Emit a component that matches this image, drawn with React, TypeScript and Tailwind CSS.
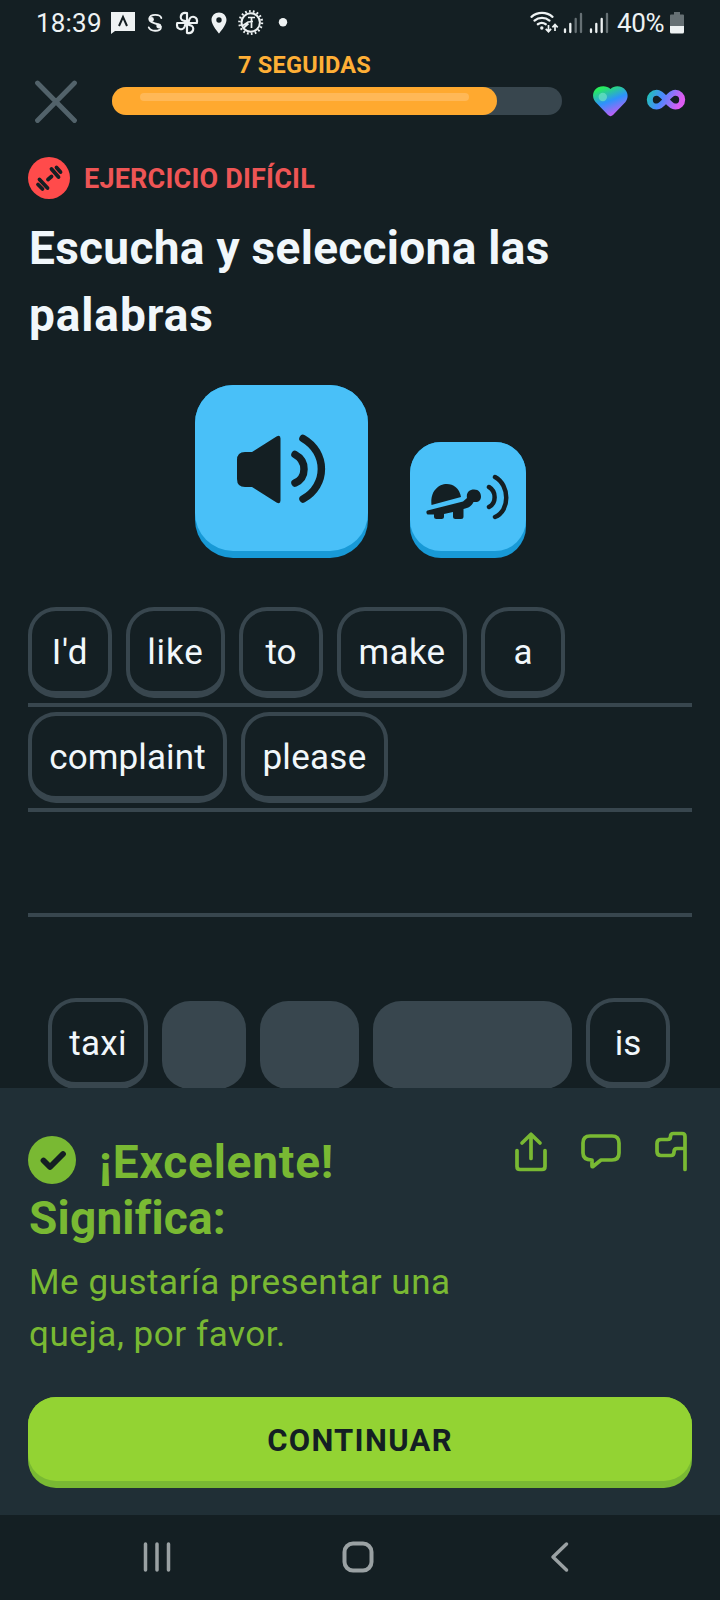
import type { ReactNode } from "react";

function Chip({ children, width, tracking = "" }: { children: ReactNode; width: string; tracking?: string }) {
  return (
    <button
      className={`${width} flex h-[91px] shrink-0 items-center justify-center rounded-[28px] border-4 border-b-[7px] border-[#38464e] pt-[3px] text-[35px] leading-none text-[#f1f7fb] ${tracking}`}
    >
      {children}
    </button>
  );
}

function Used({ width }: { width: string }) {
  return <div className={`${width} mt-[3px] h-[88px] shrink-0 rounded-[28px] bg-[#38464e]`} />;
}

function StatusBar() {
  return (
    <div className="flex h-[45px] items-center text-[26px] leading-none text-[#eef2f3]">
      <span className="ml-[36px] w-[75px] tracking-[0.200px]">18:39</span>
      <svg className="h-[45px] w-[180px]" viewBox="111 0 180 45" fill="none">
        <path d="M111 12h24v19h-20l-4 3z" fill="#eef2f3" />
        <path d="M119 26l4-9 4 9" stroke="#141f23" strokeWidth="2" />
        <path
          d="M161.300 18c-1-4-11-4.500-12 .5-.3 3.500 3 4 6 5 4 1 6.500 2 5.500 4.500-1 4-10.500 3.500-12-.5"
          stroke="#eef2f3"
          strokeWidth="1.900"
          strokeLinecap="round"
        />
        <circle cx="151.500" cy="19.500" r="2.400" fill="#eef2f3" />
        <circle cx="158.700" cy="26" r="2.400" fill="#eef2f3" />
        <g stroke="#eef2f3" strokeWidth="2.200" strokeLinejoin="round">
          <path d="M187 23V13.200c-7-1.500-8 6-3.500 7.500 2 .4 3.500 1 3.500 2.300z" />
          <path d="M187 23V13.200c-7-1.500-8 6-3.500 7.500 2 .4 3.500 1 3.500 2.300z" transform="rotate(90 187 23)" />
          <path d="M187 23V13.200c-7-1.500-8 6-3.500 7.500 2 .4 3.500 1 3.500 2.300z" transform="rotate(180 187 23)" />
          <path d="M187 23V13.200c-7-1.500-8 6-3.500 7.500 2 .4 3.500 1 3.500 2.300z" transform="rotate(270 187 23)" />
        </g>
        <path
          fillRule="evenodd"
          d="M219 12.500c-4.200 0-7.500 3.200-7.500 7.400 0 5 7.500 13.500 7.500 13.500s7.500-8.500 7.500-13.500c0-4.200-3.300-7.400-7.500-7.400zm0 4.800a2.700 2.700 0 1 1 0 5.400 2.700 2.700 0 0 1 0-5.400z"
          fill="#eef2f3"
        />
        <circle cx="250.700" cy="22.500" r="11.300" stroke="#eef2f3" strokeWidth="2.400" strokeDasharray="1.700 2.237" />
        <circle cx="250.700" cy="22.500" r="9.200" stroke="#eef2f3" strokeWidth="2" />
        <path d="M248 17.500h7M251.500 18v10M243 25.500l5-3.500 5-.5M243.500 28l5-4.500" stroke="#eef2f3" strokeWidth="1.700" />
        <circle cx="283" cy="22.300" r="4.200" fill="#eef2f3" />
      </svg>
      <svg className="ml-auto h-[45px] w-[87px]" viewBox="528 0 87 45" fill="none">
        <g stroke="#eef2f3" strokeWidth="2.300" strokeLinecap="round">
          <path d="M531.500 16.800c6-5.200 15-5.200 21 0" />
          <path d="M534.500 20.600c4.300-3.600 10.700-3.600 15 0" />
          <path d="M537.800 24.200c2.600-1.800 5.400-1.800 8 0" />
        </g>
        <circle cx="541.800" cy="28" r="1.700" fill="#eef2f3" />
        <path d="M548.500 25v6.500m-2.800-2.600 2.800 2.800 2.600-2.800M555 31v-6.300m-2.600 2.600 2.600-2.800 2.700 2.800" stroke="#eef2f3" strokeWidth="1.700" />
        <g strokeWidth="2.300" strokeLinecap="round" stroke="#eef2f3">
          <path d="M565 29.500V32M570.300 24v8" />
          <path d="M575.700 19v13M581 14v18" stroke="#667074" />
          <path d="M591 29.500V32M596.300 24v8M601.700 19v13" />
          <path d="M607 14v18" stroke="#667074" />
        </g>
      </svg>
      <span className="w-[55px] pl-[2px] tracking-[-0.300px]">40%</span>
      <svg className="mr-[34px] h-[45px] w-[16px]" viewBox="670 0 16 45">
        <path d="M674 12h6v2.500h3q1 0 1 1V26h-14V15.500q0-1 1-1h3z" fill="#667074" />
        <path d="M670 26h14v6q0 1.500-1.500 1.500h-11q-1.500 0-1.500-1.500z" fill="#eef2f3" />
      </svg>
    </div>
  );
}

function Header() {
  return (
    <div className="flex h-[88px] pl-[34px]">
      <svg className="mt-[35px] h-[44px] w-[44px]" viewBox="34 80 44 44">
        <path d="M37.500 83 74.500 120.500M74.500 83 37.500 120.500" stroke="#52626a" strokeWidth="4.800" strokeLinecap="round" />
      </svg>
      <div className="ml-[34px] w-[450px]">
        <div className="mt-[6px] mb-[8px] h-[28px] w-[385px] text-center text-[23.500px] leading-[28px] font-bold tracking-[0.250px] text-[#ffaf36]">
          7 SEGUIDAS
        </div>
        <div className="h-[28px] rounded-full bg-[#38464e]">
          <div className="h-[28px] w-[385px] rounded-full bg-[#ffa92f] px-[28px] pt-[6px]">
            <div className="h-[8px] rounded-full bg-[#ffb857]" />
          </div>
        </div>
      </div>
      <svg className="mt-[37px] ml-[28px] h-[40px] w-[100px]" viewBox="590 82 100 40" fill="none">
        <defs>
          <linearGradient id="heart" x1="602" y1="86" x2="614" y2="117" gradientUnits="userSpaceOnUse">
            <stop offset="0.050" stopColor="#27ed5b" />
            <stop offset="0.500" stopColor="#2d92fb" />
            <stop offset="0.950" stopColor="#c55cf5" />
          </linearGradient>
          <linearGradient id="loop" x1="648" y1="92" x2="684" y2="108" gradientUnits="userSpaceOnUse">
            <stop stopColor="#1fc3b4" />
            <stop offset="0.380" stopColor="#4b88ff" />
            <stop offset="0.850" stopColor="#dc5cf2" />
          </linearGradient>
        </defs>
        <path
          d="M610.500 89c3-3 7.500-3.500 11.500-1.700 6 3 7.300 10 3.500 14.700l-12.500 13q-2.500 2.300-5 0L595.500 102c-4.200-5-2.800-12 2.700-14.700 4.200-1.800 9.300-1.300 12.300 1.700z"
          fill="url(#heart)"
        />
        <circle cx="602.800" cy="97" r="4.200" fill="#6de3c4" fillOpacity="0.700" />
        <path
          d="M666 99.700c-4-5-6.200-6.900-9.300-6.900a6.900 6.900 0 0 0 0 13.800c3.100 0 5.300-1.900 9.300-6.900s6.200-6.900 9.300-6.900a6.900 6.900 0 0 1 0 13.800c-3.100 0-5.300-1.900-9.300-6.900z"
          stroke="url(#loop)"
          strokeWidth="6"
        />
      </svg>
    </div>
  );
}

function AudioButtons() {
  return (
    <div className="mt-[36px] flex h-[173px] items-end pl-[167px]">
      <button className="h-[173px] w-[173px] rounded-[38px] bg-[#1899d6] pb-[7px]">
        <svg className="h-[166px] w-[173px] rounded-[38px] bg-[#49c0f8]" viewBox="195 385 173 166" fill="none">
          <path
            d="M245 452h7l24.500-15.500q4-2 4 2v62q0 4-4 2L252 487h-7q-8 0-8-8v-19q0-8 8-8z"
            fill="#141f23"
          />
          <path d="M295 454.500c12 6.500 12 23 0 28.500M303 438.500c24.500 14 24.500 47 0 60.500" stroke="#141f23" strokeWidth="7.500" strokeLinecap="round" />
        </svg>
      </button>
      <button className="ml-[42px] h-[116px] w-[116px] rounded-[31px] bg-[#1899d6] pb-[7px]">
        <svg className="h-[109px] w-[116px] rounded-[31px] bg-[#49c0f8]" viewBox="410 442 116 109" fill="none">
          <path d="M431.500 505c-3-24 26-28.500 29.500-8z" fill="#141f23" />
          <path
            d="M427.500 510.500 463 501.500l4-3.500c-1-5 2-8.500 7-8.500s7 3.500 7 7-2 5.500-5.500 5.500H473.500c-2 4-5 6-10 7v7.500q0 2.500-2.500 2.500h-5.500q-2.500 0-2.500-2.500V512l-9 2v2.500q0 2.500-2.500 2.500h-5q-2.500 0-2.500-2.500V514.500h-6.500c-1.500-1-1.500-3.500 0-4z"
            fill="#141f23"
          />
          <path d="M489 487c7.500 4.500 7.500 16 0 20M495 477c15 8 15 34 0 40" stroke="#141f23" strokeWidth="4.500" strokeLinecap="round" />
        </svg>
      </button>
    </div>
  );
}

function Feedback() {
  return (
    <section className="h-[427px] bg-[#202f36] px-[28px] pt-[46px] text-[#79b933]">
      <div className="flex h-[263px]">
        <div className="w-[486px]">
          <div className="flex h-[56px] text-[46px] leading-[56px] font-bold">
            <svg className="mt-[2px] mr-[23px] h-[48px] w-[48px]" viewBox="0 0 48 48">
              <circle cx="24" cy="24" r="24" fill="#79b933" />
              <path d="m15.500 24.500 6.500 6.500 13-13" fill="none" stroke="#141f23" strokeWidth="5.800" strokeLinecap="round" strokeLinejoin="round" />
            </svg>
            <span className="tracking-[0.800px] whitespace-nowrap">¡Excelente!</span>
          </div>
          <div className="pl-px text-[46px] leading-[56px] font-bold tracking-[0.200px]">Significa:</div>
          <p className="mt-[11px] pl-px text-[35px] leading-[52px] tracking-[0.550px] whitespace-nowrap">
            Me gustaría presentar una
            <br />
            queja, por favor.
          </p>
        </div>
        <svg
          className="-mt-[6px] h-[48px] w-[178px]"
          viewBox="514 1128 178 48"
          fill="none"
          stroke="#79b933"
          strokeWidth="3.700"
          strokeLinecap="round"
          strokeLinejoin="round"
        >
          <path d="M517 1150.500v16q0 3 3 3h22q3 0 3-3v-16M531 1158.500v-24m-9 8.500 9-8.800 9 8.800" />
          <path d="M590 1136h22q7 0 7 7v10q0 7-7 7h-11l-8 6.500q-1 .5-1-.5v-6q-9 0-9-7v-10q0-7 7-7z" />
          <path d="M685 1169.500v-33q0-3-3-3h-8.500q-3 0-3 3t-3 3H661q-4 0-4 4v8q0 4 4 4h10q3 0 3-3.500t3-3.500h8" />
        </svg>
      </div>
      <button className="h-[91px] w-[664px] rounded-[28px] bg-[#79b933] pb-[7px]">
        <span className="flex h-[84px] items-center justify-center rounded-[28px] bg-[#93d333] pt-[2px] text-[31px] leading-none font-bold tracking-[1.300px] text-[#141f23]">
          CONTINUAR
        </span>
      </button>
    </section>
  );
}

export default function App() {
  return (
    <main className="flex h-[1600px] w-[720px] flex-col overflow-hidden bg-[#141f23] font-['Roboto','Liberation_Sans',sans-serif]">
      <StatusBar />
      <Header />
      <section className="h-[955px] px-[28px] pt-[24px]">
        <div className="flex h-[42px] items-center">
          <svg className="h-[42px] w-[42px]" viewBox="0 0 42 42">
            <circle cx="21" cy="21" r="21" fill="#ff4b4b" />
            <g stroke="#141f23" strokeWidth="3.800" strokeLinecap="round">
              <path d="m23.500 12 7 8M28.500 10.500l4 4.500M11.500 22.500l8 8.500M10 27.500l4.500 4.500M20 22.500l3.500-3" />
            </g>
          </svg>
          <span className="ml-[14px] pt-[2px] text-[27px] font-bold tracking-[0.200px] whitespace-nowrap text-[#ee5555]">EJERCICIO DIFÍCIL</span>
        </div>
        <h1 className="mt-[16px] pl-px text-[46px] leading-[67px] font-bold whitespace-nowrap text-[#f1f7fb]">
          <span className="tracking-[0.300px]">Escucha y selecciona las</span>
          <br />
          <span className="tracking-[0.900px]">palabras</span>
        </h1>
        <AudioButtons />
        <div className="mt-[44px]">
          <div className="flex h-[105px] gap-[14px] border-b-4 border-[#38464e] pt-[5px]">
            <Chip width="w-[84px]" tracking="tracking-[0.700px]">I'd</Chip>
            <Chip width="w-[99px]" tracking="tracking-[0.900px]">like</Chip>
            <Chip width="w-[84px]">to</Chip>
            <Chip width="w-[130px]" tracking="tracking-[0.300px]">make</Chip>
            <Chip width="w-[84px]">a</Chip>
          </div>
          <div className="flex h-[105px] gap-[14px] border-b-4 border-[#38464e] pt-[5px]">
            <Chip width="w-[199px]" tracking="tracking-[0.100px]">complaint</Chip>
            <Chip width="w-[147px]" tracking="tracking-[0.300px]">please</Chip>
          </div>
          <div className="h-[105px] border-b-4 border-[#38464e]" />
        </div>
        <div className="mt-[81px] flex h-[90px] gap-[14px] overflow-hidden pl-[20px]">
          <Chip width="w-[100px]" tracking="tracking-[0.300px]">taxi</Chip>
          <Used width="w-[84px]" />
          <Used width="w-[99px]" />
          <Used width="w-[199px]" />
          <Chip width="w-[84px]">is</Chip>
        </div>
      </section>
      <Feedback />
      <nav className="h-[85px]">
        <svg className="h-[85px] w-[720px]" viewBox="0 1515 720 85" fill="none" stroke="#9aa1a3" strokeWidth="3.500" strokeLinecap="round" strokeLinejoin="round">
          <path d="M145.500 1544v26M157 1544v26M168.500 1544v26" />
          <rect x="344.500" y="1543.500" width="27" height="27" rx="8.500" strokeWidth="4" />
          <path d="m566.500 1544-13.500 13 13.500 13" />
        </svg>
      </nav>
    </main>
  );
}
